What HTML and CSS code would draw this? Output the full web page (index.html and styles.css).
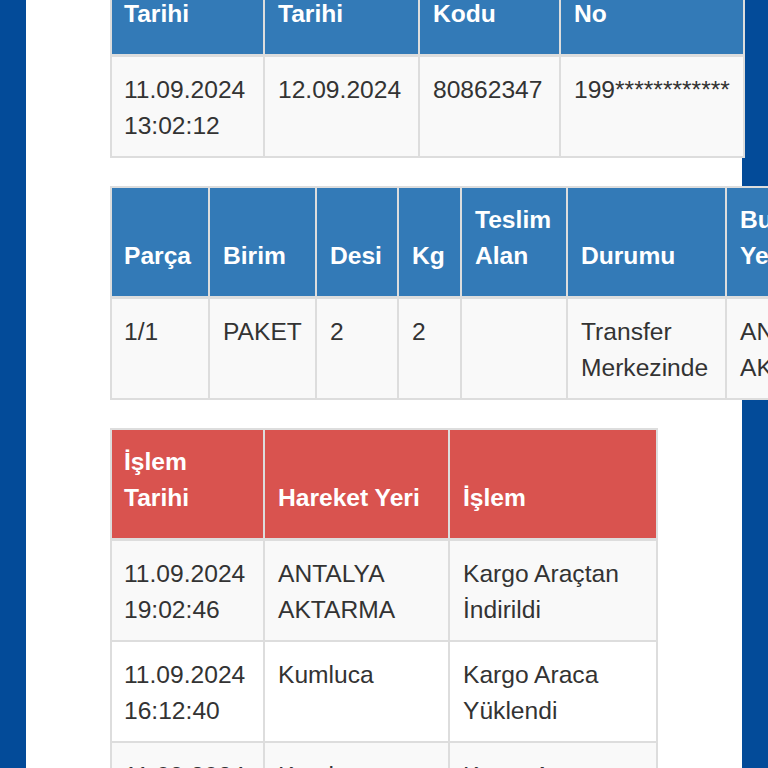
FILE: index.html
```html
<!DOCTYPE html>
<html lang="tr">
<head>
<meta charset="utf-8">
<title>Kargo Takip</title>
<link rel="stylesheet" href="styles.css">
</head>
<body>
<main class="panel">
  <div class="content">
    <table class="tbl blue t1">
      <colgroup><col class="w153"><col class="w155"><col class="w141"><col class="w184"></colgroup>
      <thead>
        <tr><th>Gönderi<br>Tarihi</th><th>Teslim<br>Tarihi</th><th>Takip<br>Kodu</th><th>Fatura<br>No</th></tr>
      </thead>
      <tbody>
        <tr><td>11.09.2024<br>13:02:12</td><td>12.09.2024</td><td>80862347</td><td>199************</td></tr>
      </tbody>
    </table>

    <table class="tbl blue t2">
      <colgroup><col class="w98"><col class="w107"><col class="w82"><col class="w63"><col class="w106"><col class="w159"><col class="w180"></colgroup>
      <thead>
        <tr><th>Parça</th><th>Birim</th><th>Desi</th><th>Kg</th><th>Teslim<br>Alan</th><th>Durumu</th><th>Bulunduğu<br>Yer</th></tr>
      </thead>
      <tbody>
        <tr><td>1/1</td><td>PAKET</td><td>2</td><td>2</td><td></td><td>Transfer<br>Merkezinde</td><td>ANTALYA<br>AKTARMA</td></tr>
      </tbody>
    </table>

    <table class="tbl red t3">
      <colgroup><col class="w153"><col class="w185"><col class="w208"></colgroup>
      <thead>
        <tr><th>İşlem<br>Tarihi</th><th>Hareket Yeri</th><th>İşlem</th></tr>
      </thead>
      <tbody>
        <tr><td>11.09.2024<br>19:02:46</td><td>ANTALYA<br>AKTARMA</td><td>Kargo Araçtan<br>İndirildi</td></tr>
        <tr><td>11.09.2024<br>16:12:40</td><td>Kumluca</td><td>Kargo Araca<br>Yüklendi</td></tr>
        <tr><td>11.09.2024<br>15:40:05</td><td>Kumluca</td><td>Kargo Araçtan<br>İndirildi</td></tr>
      </tbody>
    </table>
  </div>
</main>
</body>
</html>
```

FILE: styles.css
```css
html, body {
  margin: 0;
  height: 100%;
  overflow: hidden;
}

body {
  background: #034b99;
  font-family: "Liberation Sans", Arial, Helvetica, sans-serif;
  color: #333;
}

.panel {
  display: flow-root;
  box-sizing: border-box;
  margin-left: 26px;
  width: 716px;
  min-height: 100%;
  padding-left: 84px;
  background: #fff;
}

.content {
  margin-top: -56px;
}

.tbl {
  border-collapse: separate;
  border-spacing: 0;
  table-layout: fixed;
  border-left: 2px solid #ddd;
  border-top: 2px solid #ddd;
  margin-bottom: 28px;
  font-size: 24.6px;
  line-height: 35.5px;
}

.t1 { width: 635px; }
.t2 { width: 797px; }
.t3 { width: 548px; }

.tbl th,
.tbl td {
  box-sizing: border-box;
  border-right: 2px solid #ddd;
  border-bottom: 2px solid #ddd;
  padding: 15px 13px 13px 13px;
  text-align: left;
  vertical-align: top;
  white-space: nowrap;
}

.tbl th {
  color: #fff;
  font-weight: bold;
  vertical-align: bottom;
  padding-top: 14px;
  padding-bottom: 23px;
  border-bottom-width: 3px;
}

.tbl th:first-child,
.tbl td:first-child {
  padding-left: 12px;
}

.blue th { background: #337ab7; }
.red th { background: #d9534f; }

.tbl tbody tr:nth-child(odd) td { background: #f9f9f9; }
.tbl tbody tr:nth-child(even) td { background: #fff; }

.w63 { width: 63px; }
.w82 { width: 82px; }
.w98 { width: 98px; }
.w106 { width: 106px; }
.w107 { width: 107px; }
.w141 { width: 141px; }
.w153 { width: 153px; }
.w155 { width: 155px; }
.w159 { width: 159px; }
.w180 { width: 180px; }
.w184 { width: 184px; }
.w185 { width: 185px; }
.w208 { width: 208px; }
```
